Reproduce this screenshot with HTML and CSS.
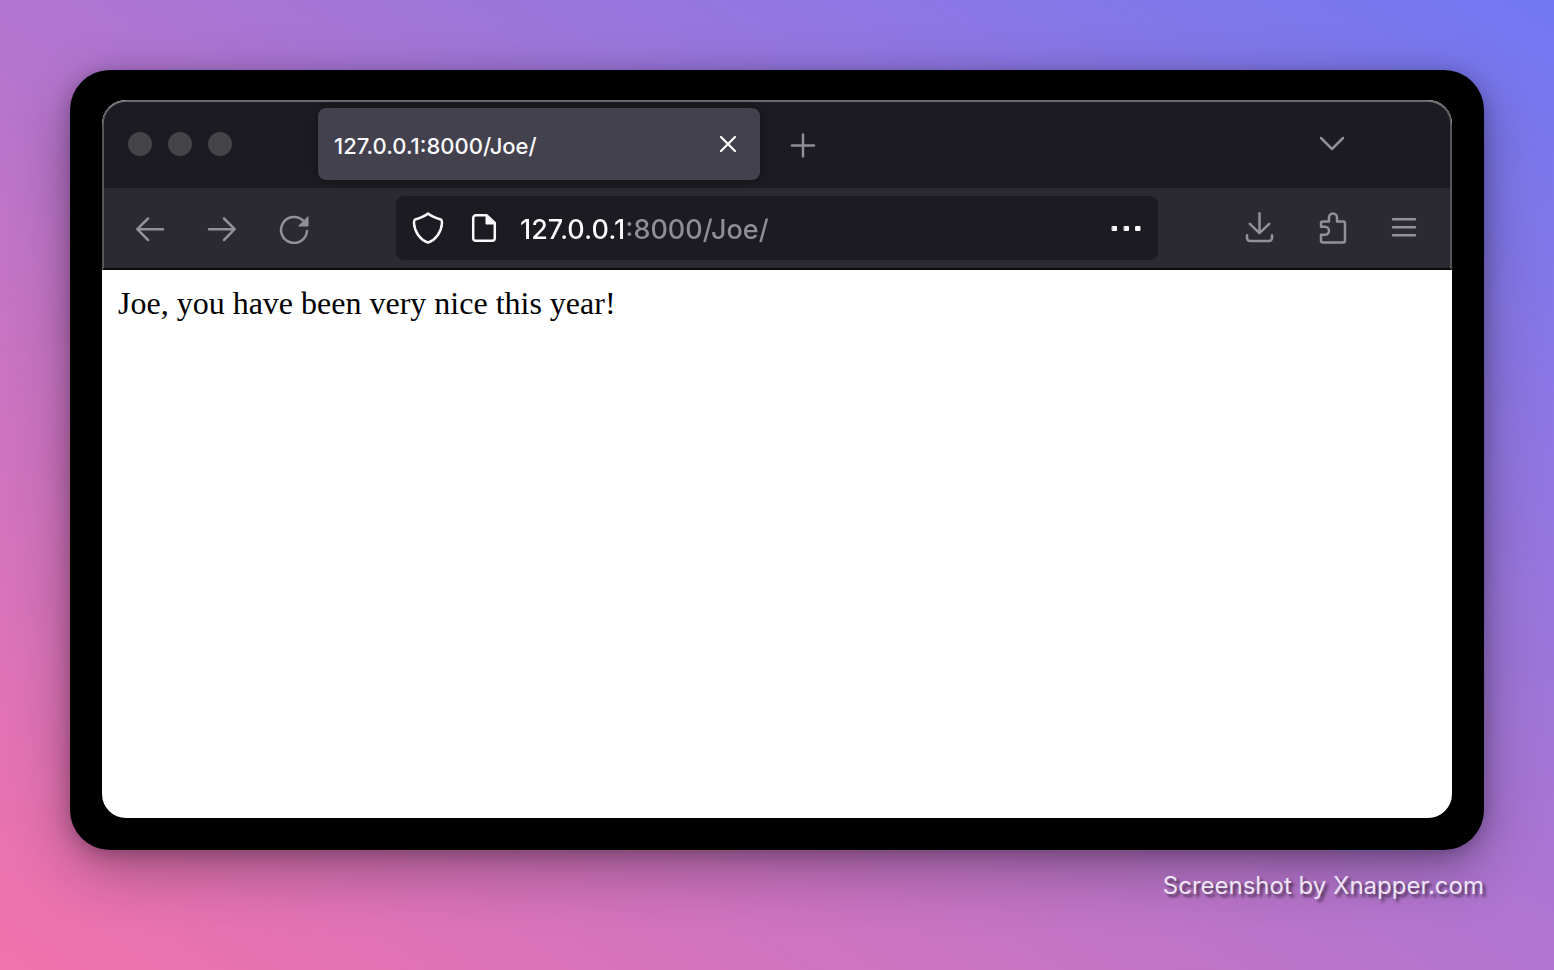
FILE: index.html
```html
<!DOCTYPE html>
<html lang="en">
<head>
<meta charset="utf-8">
<meta name="viewport" content="width=device-width, initial-scale=1">
<title>127.0.0.1:8000/Joe/</title>
<link rel="stylesheet" href="styles.css">
</head>
<body>
<main class="frame">
  <section class="window">
    <header class="chrome">
      <div class="tab-strip">
        <div class="lights"><span class="light"></span><span class="light"></span><span class="light"></span></div>
        <div class="tab">
          <span class="tab-title">127.0.0.1:8000/Joe/</span>
          <button class="icon-button close" type="button" aria-label="Close tab">
            <svg class="icon" viewBox="0 0 32 32"><path d="M9 9 23 23M23 9 9 23"/></svg>
          </button>
        </div>
        <button class="icon-button new-tab" type="button" aria-label="New tab">
          <svg class="icon" viewBox="0 0 32 32"><path d="M5 17.500h22M16 6.500v22"/></svg>
        </button>
        <button class="icon-button all-tabs" type="button" aria-label="List all tabs">
          <svg class="icon" viewBox="0 0 32 32"><path d="M5 10 16 21 27 10"/></svg>
        </button>
      </div>
      <nav class="toolbar" aria-label="Navigation">
        <div class="group">
          <button class="icon-button tool" type="button" aria-label="Back">
            <svg class="icon" viewBox="0 0 32 32"><path d="M3.500 17.200H29M14 6.500 3.300 17.200 14 28"/></svg>
          </button>
          <button class="icon-button tool" type="button" aria-label="Forward">
            <svg class="icon" viewBox="0 0 32 32"><path d="M3 17.200H28.500M18 6.500 28.700 17.200 18 28"/></svg>
          </button>
          <button class="icon-button tool" type="button" aria-label="Reload">
            <svg class="icon" viewBox="0 0 32 32"><path d="M29 19A13 13 0 1 1 25 8.500"/><path class="solid" d="M30 5v9h-9z"/></svg>
          </button>
        </div>
        <div class="address">
          <div class="site-icons">
            <button class="icon-button" type="button" aria-label="Tracking protection">
              <svg class="icon" viewBox="0 0 32 32"><path d="M16 1.500C13 4 8 6 3.200 7.500C2 8 1.900 10 2.100 12C2.700 20 8 27.500 16 30.700C24 27.500 29.300 20 29.900 12C30.100 10 30 8 28.800 7.500C24 6 19 4 16 1.500Z"/></svg>
            </button>
            <button class="icon-button" type="button" aria-label="Site information">
              <svg class="icon" viewBox="0 0 32 32"><path d="M18.500 3.200H8a2.800 2.800 0 0 0-2.800 2.800V26A2.800 2.800 0 0 0 8 28.800H24a2.800 2.800 0 0 0 2.800-2.800V11z"/><path class="solid" d="M18 3.200V12h8.800z"/></svg>
            </button>
          </div>
          <input class="url" type="text" aria-label="Address" value="127.0.0.1:8000/Joe/" spellcheck="false">
          <button class="icon-button" type="button" aria-label="Page actions">
            <svg class="icon" viewBox="0 0 32 32"><path class="solid" d="M2.500 14.500h4v4h-4zM14.500 14.500h4v4h-4zM26 14.500h4v4h-4z"/></svg>
          </button>
        </div>
        <div class="group">
          <button class="icon-button tool" type="button" aria-label="Downloads">
            <svg class="icon" viewBox="0 0 32 32"><path d="M15.500 1.200V21M5.800 11.800 15.500 21.200 25.200 11.800M3 23.200V26a3 3 0 0 0 3 3H25a3 3 0 0 0 3-3V23.200"/></svg>
          </button>
          <button class="icon-button tool" type="button" aria-label="Extensions">
            <svg class="icon" viewBox="0 0 32 32"><path d="M5 14.700V11.500a2 2 0 0 1 2-2h6V5.500a4 4 0 0 1 8 0v4h6a2 2 0 0 1 2 2v17a2 2 0 0 1-2 2H7a2 2 0 0 1-2-2v-5.800h4a4 4 0 0 0 0-8z"/></svg>
          </button>
          <button class="icon-button tool" type="button" aria-label="Menu">
            <svg class="icon" viewBox="0 0 32 32"><path d="M5 7.300H27M5 15.300H27M5 23.300H27"/></svg>
          </button>
        </div>
      </nav>
    </header>
    <article class="page">Joe, you have been very nice this year!</article>
  </section>
</main>
<footer class="credit">Screenshot by Xnapper.com</footer>
</body>
</html>
```
FILE: styles.css
```css
* {
  box-sizing: border-box;
}

body {
  margin: 0;
  min-height: 100vh;
  padding: 70px 70px 0;
  display: flex;
  flex-direction: column;
  background: linear-gradient(to top right, #f272ac, #7178f3);
  font-family: Inter, "Liberation Sans", sans-serif;
}

.frame {
  flex: 1;
  display: flex;
  padding: 30px 32px 32px;
  border-radius: 40px;
  background: #000;
  box-shadow: 0 20px 60px rgba(0, 0, 0, 0.3), 0 4px 20px rgba(0, 0, 0, 0.25);
}

.window {
  flex: 1;
  min-width: 0;
  display: flex;
  flex-direction: column;
  overflow: hidden;
  border-radius: 24px;
  background: #fff;
}

.chrome {
  border: 2px solid #57565b;
  border-top-color: #6b6a6e;
  border-bottom-color: #0c0c0d;
  border-radius: 24px 24px 0 0;
  background: #2b2a33;
}

.tab-strip {
  display: flex;
  align-items: center;
  padding: 6px 102px 8px 24px;
  border-radius: 22px 22px 0 0;
  background: #1c1b22;
}

.lights {
  display: flex;
  gap: 16px;
  margin-right: 86px;
}

.light {
  width: 24px;
  height: 24px;
  border-radius: 50%;
  background: #454449;
}

.tab {
  flex: 0 1 442px;
  height: 72px;
  display: flex;
  align-items: center;
  justify-content: space-between;
  padding: 0 16px;
  border-radius: 8px;
  background: #42414d;
  box-shadow: 0 0 8px rgba(0, 0, 0, 0.4);
  color: #fbfbfe;
}

.tab-title {
  padding-top: 4px;
  font-size: 22px;
  font-weight: 500;
  line-height: 28px;
}

.icon-button {
  display: flex;
  align-items: center;
  justify-content: center;
  flex: none;
  width: 32px;
  height: 32px;
  padding: 0;
  border: 0;
  background: none;
  color: inherit;
}

.icon {
  width: 32px;
  height: 32px;
  fill: none;
  stroke: currentColor;
  stroke-width: 2.5;
  stroke-linecap: round;
  stroke-linejoin: round;
}

.close .icon {
  stroke-width: 2.2;
}

.solid {
  fill: currentColor;
  stroke-width: 1;
}

.new-tab,
.all-tabs {
  color: #8f8e94;
}

.new-tab {
  margin-left: 27px;
}

.all-tabs {
  margin-left: auto;
}

.toolbar {
  display: flex;
  align-items: center;
  gap: 70px;
  padding: 8px 14px;
  color: #929197;
}

.group {
  display: flex;
  gap: 8px;
}

.tool {
  width: 64px;
  height: 64px;
}

.address {
  flex: 1;
  min-width: 0;
  height: 64px;
  display: flex;
  align-items: center;
  gap: 20px;
  padding: 0 16px;
  border-radius: 8px;
  background: #1c1b22;
  color: #fbfbfe;
}

.site-icons {
  display: flex;
  gap: 24px;
}

.url {
  flex: 1;
  min-width: 0;
  height: 40px;
  padding: 2px 0 0;
  border: 0;
  outline: 0;
  background: linear-gradient(to right, #fbfbfe 107px, #8f8e94 107px) text;
  color: transparent;
  caret-color: #fbfbfe;
  font: 500 27px Inter, "Liberation Sans", sans-serif;
}

.page {
  flex: 1;
  padding: 16px;
  color: #000;
  font: 32px/34px "Liberation Serif", "Times New Roman", serif;
}

.credit {
  height: 120px;
  padding-top: 20px;
  text-align: right;
  color: #efe4f5;
  font-size: 24px;
  font-weight: 400;
  line-height: 32px;
  text-shadow: 3px 3px 3px rgba(0, 0, 0, 0.55);
}
```
